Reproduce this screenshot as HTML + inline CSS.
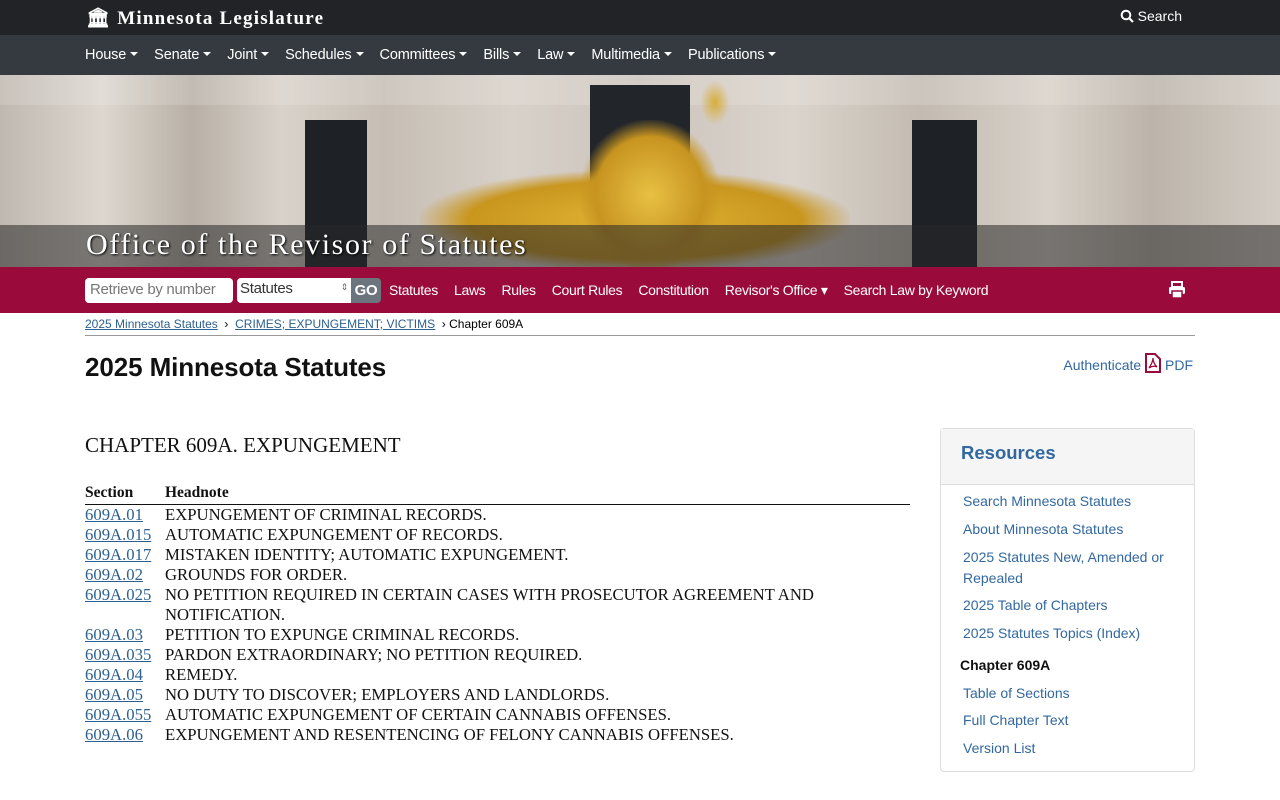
<!DOCTYPE html>
<html><head><meta charset="utf-8"><style>
*{box-sizing:border-box;margin:0;padding:0}
body{width:1280px;height:800px;overflow:hidden;background:#fff;font-family:"Liberation Sans",Arial,sans-serif;}
.top{height:35px;background:#212327;position:relative}
.logo{position:absolute;left:86px;top:6px;color:#fff;font-family:"Liberation Serif",serif;font-size:19px;letter-spacing:1.2px;font-weight:bold}
.srch{position:absolute;right:98px;top:8px;color:#fff;font-size:14px}
.nav{height:40px;background:#343a40;color:#fff;font-size:14.5px;padding-left:85px;display:flex;align-items:center;letter-spacing:-0.15px}
.nav span{margin-right:16px}
.nav span:after{content:"";display:inline-block;margin-left:4px;vertical-align:3px;border-left:4px solid transparent;border-right:4px solid transparent;border-top:4px solid #fff}
.ban{position:relative;height:192px;overflow:hidden;background:linear-gradient(90deg,#bfb8b0 0%,#ddd7cf 8%,#b8b0a7 15%,#d9d2ca 22%,#c6beb5 30%,#d8d1c9 40%,#ccc4bc 50%,#dbd4cc 62%,#c3bbb2 72%,#d8d1c9 82%,#bcb4ab 90%,#d3ccc4 100%)}
.ban div{position:absolute}
.strip{left:0;right:0;top:150px;height:42px;background:rgba(40,40,40,.55)}
.title{left:86px;top:153px;color:#fff;font-family:"Liberation Serif",serif;font-size:30px;letter-spacing:1.6px;text-shadow:1px 1px 2px #000}
.red{height:46px;background:#9a0a3a;position:relative;display:flex;align-items:center;padding-left:85px;color:#fff;font-size:14px;letter-spacing:-0.3px}
.inp{width:148px;height:25px;background:#fff;border-radius:4px;color:#777;font-size:15px;padding:3px 5px}
.sel{width:114px;height:25px;background:#fff;border-radius:4px 0 0 4px;color:#333;font-size:15px;padding:2px 3px;margin-left:4px;position:relative}
.go{width:30px;height:25px;background:#6c757d;border-radius:0 4px 4px 0;font-weight:bold;font-size:15px;text-align:center;line-height:25px}
.red .l{margin-left:8px;margin-right:8px}
.bc{margin:0 85px;border-bottom:1px solid #999;height:23px;font-size:12px;padding-top:4px}
.bc a{color:#2d5f8f;text-decoration:underline}
h1{position:absolute;left:85px;top:352px;font-size:26px;font-weight:bold;color:#111;letter-spacing:-0.1px}
.auth{position:absolute;right:87px;top:353px;color:#3268a0;font-size:14px}
.ch{position:absolute;left:85px;top:433px;font-family:"Liberation Serif",serif;font-size:21px;color:#111}
table{position:absolute;left:85px;top:482px;width:825px;border-collapse:collapse;font-family:"Liberation Serif",serif;font-size:16.7px;color:#111}
th{text-align:left;font-weight:bold;border-bottom:1px solid #111;padding:1px 0;height:22px;font-size:15.5px}
td{vertical-align:top;line-height:20px;padding:0}
td a{color:#2d5f8f;text-decoration:underline}
.res{position:absolute;left:940px;top:428px;width:255px;height:344px;border:1px solid #ddd;border-radius:4px}
.res .h{height:56px;background:#f5f5f5;border-bottom:1px solid #ddd;color:#3268a0;font-size:18.5px;font-weight:bold;padding:13px 20px}
.res a{display:block;color:#3268a0;font-size:14px;margin-left:22px;line-height:21px}
</style></head><body>
<div class="top"><div class="logo">🏛 Minnesota Legislature</div><div class="srch"><svg width="14" height="14" viewBox="0 0 14 14" style="vertical-align:-2px"><circle cx="6" cy="6" r="4.3" fill="none" stroke="#fff" stroke-width="2"/><path d="M9 9l4 4" stroke="#fff" stroke-width="2.2"/></svg> Search</div></div>
<div class="nav"><span>House</span><span>Senate</span><span>Joint</span><span>Schedules</span><span>Committees</span><span>Bills</span><span>Law</span><span>Multimedia</span><span>Publications</span></div>
<div class="ban">
<div style="left:0;top:0;width:1280px;height:30px;background:rgba(255,255,255,.15)"></div>
<div style="left:305px;top:45px;width:62px;height:150px;background:#1e2126"></div>
<div style="left:590px;top:10px;width:100px;height:100px;background:#22262b"></div>
<div style="left:912px;top:45px;width:65px;height:150px;background:#1e2126"></div>
<div style="left:420px;top:95px;width:430px;height:100px;background:radial-gradient(ellipse at center,#e0b434 0%,#c9961e 55%,rgba(200,150,30,0) 72%)"></div>
<div style="left:580px;top:45px;width:140px;height:150px;background:radial-gradient(ellipse at center,#e8c043 0%,#c79420 55%,rgba(200,150,30,0) 72%)"></div>
<div style="left:700px;top:5px;width:30px;height:45px;background:radial-gradient(#d8ad3a,rgba(200,150,30,0) 70%)"></div>
<div class="strip"></div>
<div class="title">Office of the Revisor of Statutes</div>
</div>
<div class="red"><div class="inp">Retrieve by number</div><div class="sel">Statutes<span style="position:absolute;right:3px;top:4px;font-size:9px;color:#666">⇕</span></div><div class="go">GO</div>
<span class="l">Statutes</span><span class="l">Laws</span><span class="l">Rules</span><span class="l">Court Rules</span><span class="l">Constitution</span><span class="l">Revisor's Office ▾</span><span class="l">Search Law by Keyword</span>
<svg style="position:absolute;right:94px;top:14px" width="18" height="18" viewBox="0 0 18 18"><rect x="4" y="1" width="10" height="5" fill="none" stroke="#fff" stroke-width="2"/><rect x="1" y="6" width="16" height="7" rx="1.5" fill="#fff"/><rect x="4" y="10" width="10" height="7" fill="#fff" stroke="#9a0a3a" stroke-width="1.5"/></svg></div>
<div class="bc"><a>2025 Minnesota Statutes</a> &nbsp;›&nbsp; <a>CRIMES; EXPUNGEMENT; VICTIMS</a> &nbsp;›&nbsp;Chapter 609A</div>
<h1>2025 Minnesota Statutes</h1>
<div class="auth">Authenticate <svg width="16" height="20" viewBox="0 0 16 20" style="vertical-align:-3px"><path d="M1 1h9l5 5v13H1z" fill="none" stroke="#9a0a3a" stroke-width="2"/><path d="M4 15c2-3 4-7 4-10M4 15c3-2 6-2 8-1M8 5c0 4 2 7 4 9" fill="none" stroke="#9a0a3a" stroke-width="1.3"/></svg> PDF</div>
<div class="ch">CHAPTER 609A. EXPUNGEMENT</div>
<table><tr><th style="width:80px">Section</th><th>Headnote</th></tr>
<tr><td><a>609A.01</a></td><td>EXPUNGEMENT OF CRIMINAL RECORDS.</td></tr>
<tr><td><a>609A.015</a></td><td>AUTOMATIC EXPUNGEMENT OF RECORDS.</td></tr>
<tr><td><a>609A.017</a></td><td>MISTAKEN IDENTITY; AUTOMATIC EXPUNGEMENT.</td></tr>
<tr><td><a>609A.02</a></td><td>GROUNDS FOR ORDER.</td></tr>
<tr><td><a>609A.025</a></td><td>NO PETITION REQUIRED IN CERTAIN CASES WITH PROSECUTOR AGREEMENT AND<br>NOTIFICATION.</td></tr>
<tr><td><a>609A.03</a></td><td>PETITION TO EXPUNGE CRIMINAL RECORDS.</td></tr>
<tr><td><a>609A.035</a></td><td>PARDON EXTRAORDINARY; NO PETITION REQUIRED.</td></tr>
<tr><td><a>609A.04</a></td><td>REMEDY.</td></tr>
<tr><td><a>609A.05</a></td><td>NO DUTY TO DISCOVER; EMPLOYERS AND LANDLORDS.</td></tr>
<tr><td><a>609A.055</a></td><td>AUTOMATIC EXPUNGEMENT OF CERTAIN CANNABIS OFFENSES.</td></tr>
<tr><td><a>609A.06</a></td><td>EXPUNGEMENT AND RESENTENCING OF FELONY CANNABIS OFFENSES.</td></tr>
</table>
<div class="res"><div class="h">Resources</div>
<div style="padding-top:6px">
<a style="margin-bottom:7px">Search Minnesota Statutes</a>
<a style="margin-bottom:7px">About Minnesota Statutes</a>
<a style="margin-bottom:6px">2025 Statutes New, Amended or Repealed</a>
<a style="margin-bottom:7px">2025 Table of Chapters</a>
<a style="margin-bottom:13px">2025 Statutes Topics (Index)</a>
<div style="margin-left:19px;font-size:14px;font-weight:bold;color:#111;margin-bottom:10px">Chapter 609A</div>
<a style="margin-bottom:6px">Table of Sections</a>
<a style="margin-bottom:7px">Full Chapter Text</a>
<a>Version List</a></div></div>
</body></html>
